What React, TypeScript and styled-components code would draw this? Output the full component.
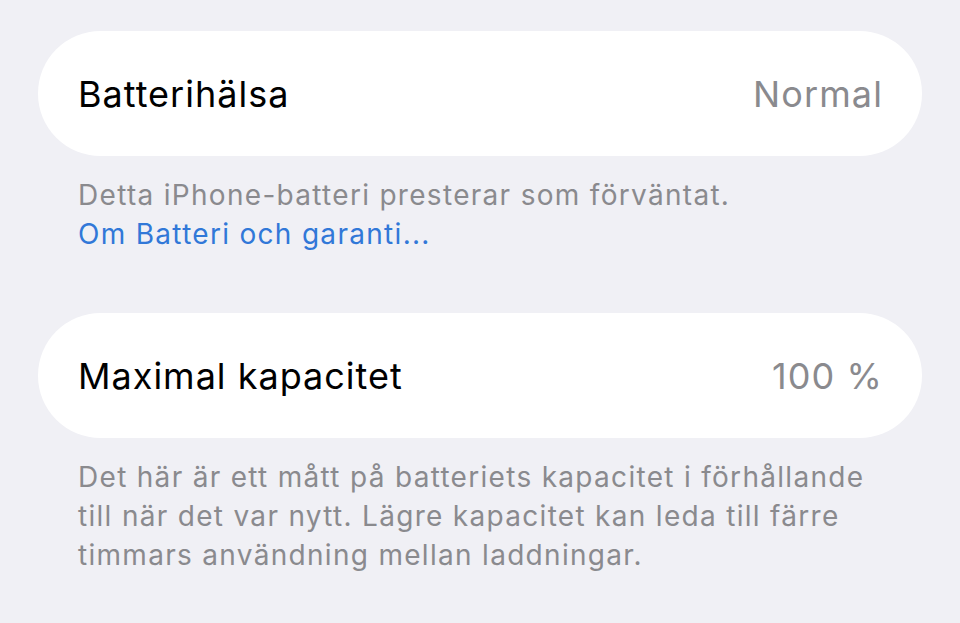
import React from 'react'
import styled, { createGlobalStyle } from 'styled-components'

const GlobalStyle = createGlobalStyle`
  html, body {
    margin: 0;
    padding: 0;
    background: #f0f0f5;
  }
  body {
    font-family: Inter, "Noto Sans", "Liberation Sans", sans-serif;
    -webkit-font-smoothing: antialiased;
  }
`

const Page = styled.div`
  width: 960px;
  height: 623px;
  box-sizing: border-box;
  padding: 31px 38px 0;
  overflow: hidden;
  background: #f0f0f5;
`

const Section = styled.section`
  margin-bottom: 59px;
`

const Cell = styled.div`
  height: 125px;
  border-radius: 62.5px;
  background: #ffffff;
  display: flex;
  align-items: center;
  justify-content: space-between;
  padding: 0 39px 0 40px;
  box-sizing: border-box;
`

const Label = styled.span`
  font-size: 36px;
  color: #000000;
  letter-spacing: 1px;
`

const Value = styled.span`
  font-size: 36px;
  color: #8a8a8e;
  letter-spacing: 1.1px;
`

const Footer = styled.p`
  margin: 20px 0 0;
  padding: 0 40px;
  font-size: 28px;
  line-height: 39px;
  letter-spacing: 1.3px;
  color: #8a8a8e;
`

const Link = styled.a`
  display: block;
  color: #3178d8;
  text-decoration: none;
`

const App = () => (
  <Page>
    <GlobalStyle />
    <Section>
      <Cell>
        <Label>Batterihälsa</Label>
        <Value>Normal</Value>
      </Cell>
      <Footer>
        Detta iPhone-batteri presterar som förväntat.
        <Link href="#">Om Batteri och garanti...</Link>
      </Footer>
    </Section>
    <Section>
      <Cell>
        <Label>Maximal kapacitet</Label>
        <Value>100 %</Value>
      </Cell>
      <Footer>
        Det här är ett mått på batteriets kapacitet i förhållande till när det var nytt. Lägre
        kapacitet kan leda till färre timmars användning mellan laddningar.
      </Footer>
    </Section>
  </Page>
)

export default App
